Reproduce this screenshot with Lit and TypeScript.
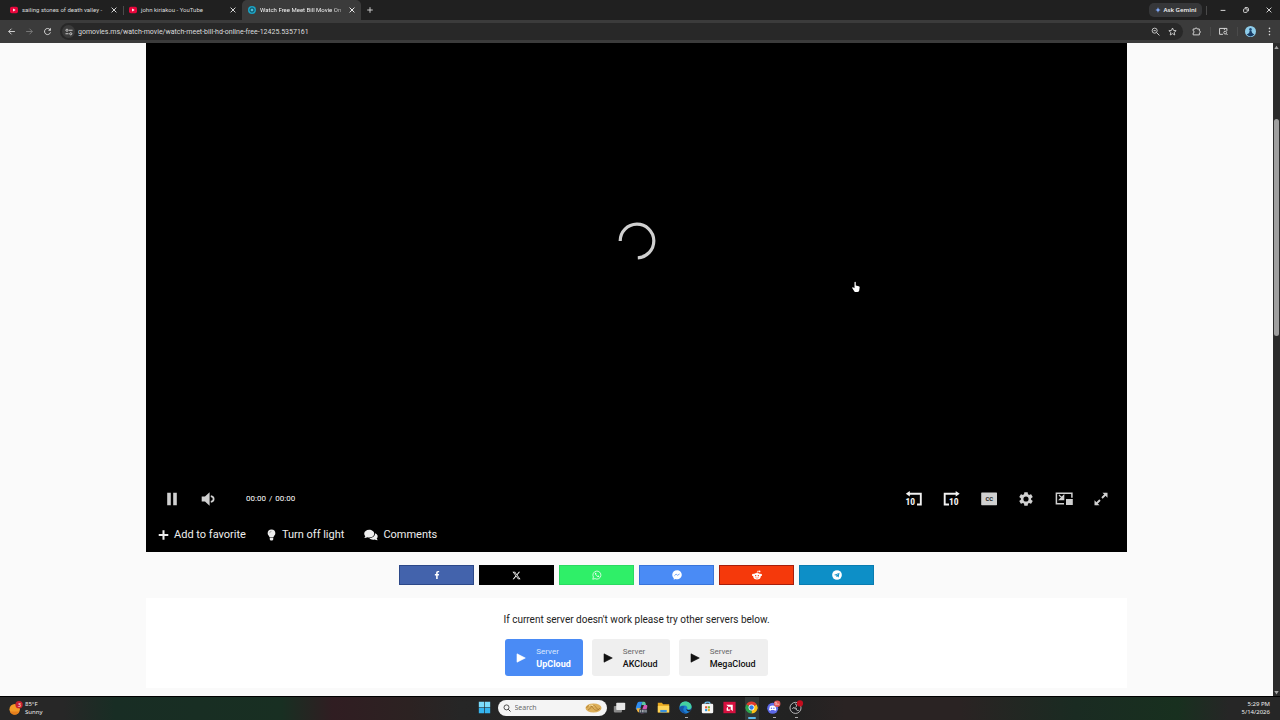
import { LitElement, html, css, svg, nothing, TemplateResult } from "lit";
import { customElement, property } from "lit/decorators.js";

type Glyph = { box: string; art: TemplateResult };

const GLYPHS: Record<string, Glyph> = {
  youtube: { box: "0 0 16 16", art: svg`<rect x="0" y="1.5" width="16" height="13" rx="3.5" fill="#e8063c"/><path d="M6.3 5v6l5-3z" fill="#fff"/>` },
  gomovies: { box: "0 0 16 16", art: svg`<circle cx="8" cy="8" r="8" fill="#1aa3c4"/><circle cx="8" cy="8" r="4.2" fill="none" stroke="#16404f" stroke-width="1.8"/><circle cx="8" cy="8" r="1.6" fill="#9fdcea"/>` },
  close: { box: "0 0 10 10", art: svg`<path d="M2 2l6 6M8 2L2 8" stroke="currentColor" stroke-width="1.2"/>` },
  plus: { box: "0 0 10 10", art: svg`<path d="M5 1.5v7M1.500 5h7" stroke="currentColor" stroke-width="1.1"/>` },
  spark: { box: "0 0 16 16", art: svg`<path d="M8 0c.7 5 3 7.300 8 8-5 .7-7.300 3-8 8-.7-5-3-7.300-8-8 5-.7 7.300-3 8-8z" fill="#7ea6f5"/>` },
  minimize: { box: "0 0 10 10", art: svg`<path d="M2 5.500h6" stroke="currentColor" stroke-width="1.200"/>` },
  restore: { box: "0 0 10 10", art: svg`<rect x="2" y="3.500" width="4.500" height="4.500" rx="1" fill="none" stroke="currentColor" stroke-width="1.200"/><path d="M3.500 2h3a1.500 1.500 0 0 1 1.500 1.500v3" fill="none" stroke="currentColor" stroke-width="1.200"/>` },
  back: { box: "0 0 16 16", art: svg`<path d="M14 8H3M8 3L3 8l5 5" fill="none" stroke="currentColor" stroke-width="1.600"/>` },
  forward: { box: "0 0 16 16", art: svg`<path d="M2 8h11M8 3l5 5-5 5" fill="none" stroke="currentColor" stroke-width="1.600"/>` },
  reload: { box: "0 0 16 16", art: svg`<path d="M13.300 9.500A5.400 5.400 0 1 1 12.200 4.500" fill="none" stroke="currentColor" stroke-width="1.700"/><path d="M14 1.500v5H9z" fill="currentColor"/>` },
  tune: { box: "0 0 16 16", art: svg`<path d="M8 4.500h7M1 11.500h6" stroke="currentColor" stroke-width="1.800"/><circle cx="4" cy="4.500" r="2.200" fill="none" stroke="currentColor" stroke-width="1.700"/><circle cx="11.500" cy="11.500" r="2.200" fill="none" stroke="currentColor" stroke-width="1.700"/>` },
  zoom: { box: "0 0 16 16", art: svg`<circle cx="6.500" cy="6.500" r="4.500" fill="none" stroke="currentColor" stroke-width="1.500"/><path d="M10 10l5 5M4.500 6.500h4" stroke="currentColor" stroke-width="1.600"/>` },
  star: { box: "0 0 16 16", art: svg`<path d="M8 1.800l1.900 4.300 4.600.4-3.500 3.100 1 4.600L8 11.800l-4 2.400 1-4.600-3.500-3.100 4.600-.4z" fill="none" stroke="currentColor" stroke-width="1.500"/>` },
  puzzle: { box: "0 0 16 16", art: svg`<path d="M2 3.500h3.500a1.800 1.800 0 0 1 3.600 0h4v3.500a1.800 1.800 0 0 1 0 3.600v3.400H2v-3.400a1.800 1.800 0 0 0 0-3.600z" fill="none" stroke="currentColor" stroke-width="1.600"/>` },
  lens: { box: "0 0 16 16", art: svg`<path d="M7 13H1V2.500h13V7" fill="none" stroke="currentColor" stroke-width="1.700"/><path d="M9.500 2.500v3" stroke="currentColor" stroke-width="1.500"/><circle cx="11" cy="10" r="2.500" fill="none" stroke="currentColor" stroke-width="1.600"/><path d="M12.700 11.700l2.500 2.500" stroke="currentColor" stroke-width="1.700"/>` },
  avatar: { box: "0 0 16 16", art: svg`<circle cx="8" cy="8" r="8" fill="#8ecdea"/><path d="M2.500 12.500a7 7 0 0 0 11 0L10.500 10l-1.500-4h-2l-1 4z" fill="#173a63"/><circle cx="8" cy="4.800" r="1.800" fill="#1f4c7a"/>` },
  dots: { box: "0 0 16 16", art: svg`<circle cx="8" cy="2.500" r="1.400" fill="currentColor"/><circle cx="8" cy="8" r="1.400" fill="currentColor"/><circle cx="8" cy="13.500" r="1.400" fill="currentColor"/>` },
  spinner: { box: "0 0 38 38", art: svg`<path d="M2.200 19A16.800 16.800 0 1 1 19.800 35.800" fill="none" stroke="#d0d0d0" stroke-width="3.200"/>` },
  hand: { box: "0 0 16 22", art: svg`<path d="M5 1.500c0-1.500 2.500-1.500 2.500 0V8l6 1.500c1.500.4 2 1.200 1.800 2.700l-.8 5.300c-.3 2-1.300 3.500-3.500 3.500H7.500c-1.500 0-2.300-.6-3-1.700L.7 13.500c-.8-1.300.8-2.500 2-1.500L5 13.500z" fill="#fff"/>` },
  pause: { box: "0 0 20 20", art: svg`<path d="M5.200 3.700h3.600v12.600H5.200zM11.200 3.700h3.600v12.600h-3.600z" fill="currentColor"/>` },
  volume: { box: "0 0 20 20", art: svg`<path d="M3.700 7.500h3.300l4.600-4.200v13.400L7 12.500H3.700z" fill="currentColor"/><path d="M12.800 7.200c3.800.6 3.800 5 0 5.600" fill="none" stroke="currentColor" stroke-width="1.700"/>` },
  rewind: { box: "0 0 20 20", art: svg`<path d="M4 4.700h12.800V15.500H13" fill="none" stroke="currentColor" stroke-width="1.900"/><path d="M1.800 4.700L5.800 1.900v5.600z" fill="currentColor"/><text x="1.500" y="16.300" font-family="Roboto Condensed, Roboto, sans-serif" font-weight="700" font-size="9.500" fill="currentColor">10</text>` },
  skip: { box: "0 0 20 20", art: svg`<path d="M16.500 4.700H3.700V15.500H8" fill="none" stroke="currentColor" stroke-width="1.900"/><path d="M18.700 4.700L14.700 1.900v5.600z" fill="currentColor"/><text x="8" y="16.300" font-family="Roboto Condensed, Roboto, sans-serif" font-weight="700" font-size="9.500" fill="currentColor">10</text>` },
  captions: { box: "0 0 20 20", art: svg`<rect x="2.200" y="3.500" width="15.800" height="12.700" rx=".6" fill="currentColor"/><text x="6.400" y="12" font-family="Roboto, sans-serif" font-weight="700" font-size="6" fill="#222">CC</text>` },
  gear: { box: "-2 -2 28 28", art: svg`<path fill="currentColor" d="M19.140 12.940c.04-.3.06-.61.06-.94 0-.32-.02-.64-.07-.94l2.030-1.580c.18-.14.23-.41.12-.61l-1.920-3.320c-.12-.22-.37-.29-.59-.22l-2.390.96c-.5-.38-1.030-.7-1.620-.94l-.36-2.540c-.04-.24-.24-.41-.48-.41h-3.840c-.24 0-.43.17-.47.41l-.36 2.540c-.59.24-1.130.57-1.620.94l-2.390-.96c-.22-.08-.47 0-.59.22L2.740 8.870c-.12.21-.08.47.12.61l2.030 1.580c-.05.3-.09.63-.09.94s.02.64.07.94l-2.030 1.580c-.18.14-.23.41-.12.61l1.920 3.320c.12.22.37.29.59.22l2.390-.96c.5.38 1.030.7 1.620.94l.36 2.540c.05.24.24.41.48.41h3.840c.24 0 .44-.17.47-.41l.36-2.540c.59-.24 1.130-.56 1.620-.94l2.390.96c.22.08.47 0 .59-.22l1.920-3.320c.12-.22.07-.47-.12-.61l-2.010-1.580zM12 15.600a3.600 3.600 0 1 1 0-7.200 3.600 3.600 0 0 1 0 7.200z"/>` },
  pip: { box: "0 0 20 20", art: svg`<path d="M10 14.800H2.400V4.300h15.500v4.500" fill="none" stroke="currentColor" stroke-width="1.500"/><rect x="12" y="10" width="6.800" height="6" fill="currentColor"/><path d="M9.700 6.500v4.200H5.500zM5 6l3.500 3.500" fill="currentColor" stroke="currentColor" stroke-width="1.200"/>` },
  expand: { box: "0 0 20 20", art: svg`<path d="M11 9l4.500-4.500M9 11l-4.500 4.500" stroke="currentColor" stroke-width="1.800"/><path d="M11.500 3.700h5v5zM3.500 11.300v5h5z" fill="currentColor"/>` },
  add: { box: "0 0 12 12", art: svg`<path d="M6 .8v10.400M.8 6h10.400" stroke="currentColor" stroke-width="2.200"/>` },
  bulb: { box: "0 0 12 12", art: svg`<path d="M6 0a4.200 4.200 0 0 0-4.200 4.200c0 2 1.600 2.600 2.100 4.300h4.200c.5-1.700 2.100-2.300 2.100-4.300A4.200 4.200 0 0 0 6 0zM4.100 9h3.800v1.800L7 12H5l-.9-1.200z" fill="currentColor"/><path d="M4 4a2 2 0 0 1 2-2" stroke="#777" stroke-width=".6" fill="none"/>` },
  comments: { box: "0 0 14 12", art: svg`<path d="M5.200.8C2.400.8.2 2.500.2 4.700c0 1 .4 1.800 1.100 2.500L.3 9c1.300 0 2.300-.4 3-.8 4 .9 6.900-.9 6.900-3.500C10.200 2.500 8 .8 5.200.8z" fill="currentColor"/><path d="M11 4.200c.2 3-2.700 5-5.700 4.900 1.200 1.400 3.300 1.900 5.300 1.400.8.500 1.800.8 3.100.8l-1-1.700c1.700-1.800 1.200-4.500-1.700-5.400z" fill="currentColor"/>` },
  facebook: { box: "0 0 320 512", art: svg`<path fill="currentColor" d="M279.140 288l14.220-92.660h-88.910v-60.130c0-25.350 12.420-50.060 52.240-50.060h40.420V6.260S260.430 0 225.360 0c-73.220 0-121.080 44.380-121.080 124.720v70.620H22.890V288h81.390v224h100.170V288z"/>` },
  x: { box: "0 0 512 512", art: svg`<path fill="currentColor" d="M389.200 48h70.600L305.600 224.200 487 464H345L233.700 318.600 106.500 464H35.800L200.700 275.500 26.800 48H172.400L272.900 180.900 389.200 48zM364.400 421.800h39.100L151.100 88h-42L364.400 421.800z"/>` },
  whatsapp: { box: "0 0 20 20", art: svg`<path d="M1.500 18.500l1.300-4.500a8 8 0 1 1 3.200 3.200z" fill="none" stroke="currentColor" stroke-width="1.500"/><path d="M7.200 5.500c-1.700.7-1.500 3 .8 5.600s5 3.600 6.300 1.900l.2-1-2.300-1.200-1.200 1.200c-1.300-.5-2.200-1.400-2.900-2.700l.9-1.200-1-2.500z" fill="currentColor"/>` },
  messenger: { box: "0 0 20 20", art: svg`<path d="M10 .5C4.600.5.500 4.400.500 9.600c0 2.700 1.100 5 3 6.600v3.300l2.800-1.400c1.200.3 2.400.5 3.700.5 5.400 0 9.500-3.900 9.500-9S15.400.5 10 .5z" fill="currentColor"/><path d="M4.800 11.500l3.400-3.300 2.800 2.300L15.200 8" fill="none" stroke="#4a8bf5" stroke-width="1.500"/>` },
  reddit: { box: "0 0 20 20", art: svg`<ellipse cx="10" cy="12.500" rx="7.500" ry="6.500" fill="currentColor"/><circle cx="2.400" cy="9.800" r="2.400" fill="currentColor"/><circle cx="17.600" cy="9.800" r="2.400" fill="currentColor"/><circle cx="15" cy="2.800" r="1.900" fill="currentColor"/><path d="M10 7l1.200-5L15 3" fill="none" stroke="currentColor" stroke-width="1.200"/><circle cx="7.300" cy="11.300" r="1.400" fill="#f5390b"/><circle cx="12.700" cy="11.300" r="1.400" fill="#f5390b"/><path d="M7 15c2 1.400 4 1.400 6 0" fill="none" stroke="#f5390b" stroke-width="1.100"/>` },
  telegram: { box: "0 0 20 20", art: svg`<circle cx="10" cy="10" r="9.700" fill="currentColor"/><path d="M3.800 10L15 5.300l-1.800 9.500-3-2.200-1.600 1.600-.5-3z" fill="#0d8fc7"/><path d="M8.300 11.200L13 7.500" stroke="currentColor" stroke-width=".9"/>` },
  play: { box: "0 0 10 10", art: svg`<path d="M1 .8L9.300 5 1 9.200z" fill="currentColor" stroke="currentColor" stroke-width=".6" stroke-linejoin="round"/>` },
  weather: { box: "0 0 16 16", art: svg`<circle cx="6.500" cy="9.500" r="6" fill="#f39a27"/><path d="M1 12a6 6 0 0 0 11 0z" fill="#e57f1c"/><circle cx="11.500" cy="4.200" r="4.200" fill="#c8202f"/><text x="9.900" y="6.500" font-family="Open Sans, sans-serif" font-size="6.500" fill="#fff">3</text>` },
  windows: { box: "0 0 16 16", art: svg`<path d="M1 1h6.600v6.600H1zM8.400 1H15v6.600H8.400z" fill="#7bdcfb"/><path d="M1 8.400h6.600V15H1zM8.400 8.400H15V15H8.400z" fill="#35b4ee"/>` },
  magnifier: { box: "0 0 16 16", art: svg`<circle cx="7" cy="6.800" r="5" fill="none" stroke="currentColor" stroke-width="1.700"/><path d="M10.500 10.500L15 15" stroke="currentColor" stroke-width="2"/>` },
  pretzel: { box: "0 0 34 20", art: svg`<ellipse cx="17" cy="10" rx="16" ry="9" fill="#dcae58"/><path d="M3 10c4-8 10-5 13 0s9 7 14 0M6 14c5-1 6-9 11-9s6 9 11 8" fill="none" stroke="#a87a30" stroke-width="1.600"/><path d="M8 6c4-3 8-2 10 1" stroke="#fbe6a8" stroke-width="2" fill="none"/>` },
  taskview: { box: "0 0 16 16", art: svg`<rect x="1" y="6" width="10" height="8" rx="1" fill="#8b8b8b"/><rect x="4" y="2" width="11" height="9" rx="1" fill="#e7e7e7"/>` },
  copilot: { box: "0 0 16 16", art: svg`<path d="M5 1h4L6 11H3C0 11 1 8 2 5S3.500 1 5 1z" fill="#2f8df0"/><path d="M9 1h2c2 0 2 2 2.500 4H8z" fill="#57c8a2"/><path d="M11 5h3c2 0 1 3 0 6s-2 4-4 4H7z" fill="#d159b4"/><path d="M2 9h5l-1 5H5c-2 0-3-3-3-5z" fill="#f2b53f"/><rect x="5" y="10" width="10" height="5" rx="1" fill="#37404d"/><path d="M6.500 14v-3M9 14v-3M11 11v3M13.500 11v3" stroke="#eee" stroke-width=".9"/>` },
  folder: { box: "0 0 16 16", art: svg`<path d="M1 2h5l1.500 2H15v10H1z" fill="#e9a920"/><path d="M1 6h14v8H1z" fill="#ffd558"/><path d="M4 11h8v3H4z" fill="#3a91dc"/>` },
  edge: { box: "0 0 16 16", art: svg`<circle cx="8" cy="8" r="7.500" fill="#1c7fd4"/><path d="M.8 7C1.500 2 5 .5 8 .5c4.500 0 7.500 3.300 7.500 6.500 0 3-4 4-5.500 2.500 1-2-1-4-3.500-4C4 5.500 2 6 .8 7z" fill="#45d0a0"/><path d="M7 7c-3 2-2 7 3 8-5 1.200-9-2-9.500-6.500C2 5.500 6 5.500 7 7z" fill="#1557a8"/><path d="M9 9.500c1.500 2 4.500 1.700 6 .7l-1 2.300c-2.500 1.300-5-.5-5-3z" fill="#202124"/>` },
  store: { box: "0 0 16 16", art: svg`<path d="M5 4V2.500C5 1 11 1 11 2.500V4" fill="none" stroke="#6fc4f5" stroke-width="1.400"/><rect x="1" y="3.500" width="14" height="11.500" rx="1.500" fill="#f4f4f4"/><path d="M5 6.500h2.600v2.600H5z" fill="#e4502d"/><path d="M8.400 6.500H11v2.600H8.400z" fill="#79b52b"/><path d="M5 9.900h2.600v2.600H5z" fill="#2b9be0"/><path d="M8.400 9.900H11v2.600H8.400z" fill="#efb020"/>` },
  amd: { box: "0 0 16 16", art: svg`<rect x=".5" y="1" width="15" height="14" fill="#d6103f"/><path d="M4 4.500h8v8l-2.500-2.500V7H6.500z" fill="#fff"/><path d="M4.500 8.500v3.500H8l1.500-1.600H6.200V7z" fill="#fff"/>` },
  chrome: { box: "0 0 16 16", art: svg`<path d="M8 8L1.500 4.250A7.500 7.500 0 0 1 14.500 4.250z" fill="#e33b2e"/><path d="M8 8L14.500 4.250A7.500 7.500 0 0 1 8 15.500z" fill="#fbc116"/><path d="M8 8v7.500A7.500 7.500 0 0 1 1.500 4.250z" fill="#2da44e"/><circle cx="8" cy="8" r="3.600" fill="#fff"/><circle cx="8" cy="8" r="2.700" fill="#2f7de9"/>` },
  discord: { box: "0 0 16 16", art: svg`<circle cx="7" cy="9" r="6.800" fill="#5c68e8"/><path d="M3.500 6.500c2-1.300 5-1.300 7 0l1 4.500c-1.500 1.300-2 1.200-2.500.2H5c-.5 1-1 1.100-2.500-.2z" fill="#fff"/><circle cx="5.500" cy="9" r=".9" fill="#5c68e8"/><circle cx="8.500" cy="9" r=".9" fill="#5c68e8"/><circle cx="12.500" cy="3.500" r="4" fill="#e2585a"/><text x="9.500" y="5.500" font-family="Open Sans, sans-serif" font-size="5" fill="#fff">9+</text>` },
  obs: { box: "0 0 16 16", art: svg`<circle cx="8" cy="8.500" r="6.800" fill="#1c1c1f" stroke="#c9c9c9" stroke-width="1.100"/><path d="M7.500 3.500c2 0 2.500 3 .5 4.500M4 9.500c1-2 3.500-1.500 4 .5M12 11.500c-2 1-4-1-3-3" fill="none" stroke="#c9c9c9" stroke-width="1.200"/><circle cx="13.500" cy="3" r="3.800" fill="#c40d1e"/>` },
  up: { box: "0 0 8 8", art: svg`<path d="M4 1l3.500 5.500h-7z" fill="currentColor"/>` },
  down: { box: "0 0 8 8", art: svg`<path d="M4 7L.5 1.500h7z" fill="currentColor"/>` },
};

@customElement("ui-glyph")
class UiGlyph extends LitElement {
  @property() name = "";
  static styles = css`
    :host { display: inline-flex; flex: none; width: 10px; height: 10px; }
    .art { width: 100%; height: 100%; display: block; overflow: visible; }
  `;
  render() {
    const g = GLYPHS[this.name];
    return g ? html`<svg class="art" viewBox=${g.box} aria-hidden="true">${g.art}</svg>` : nothing;
  }
}

@customElement("browser-chrome")
class BrowserChrome extends LitElement {
  static styles = css`
    :host { display: block; color: #dcdcdc; font: 7px/10px Roboto, sans-serif; }
    button { font: inherit; color: inherit; background: none; border: 0; padding: 0; display: flex; align-items: center; justify-content: center; }
    .strip { display: flex; align-items: center; height: 20px; background: #202020; padding-left: 4px; font-size: 6px; }
    .tab { display: flex; align-items: center; gap: 4px; width: 119px; height: 20px; padding: 0 5px 0 6px; box-sizing: border-box; }
    .tab.active { background: #3b3b3b; border-radius: 5px 5px 0 0; color: #f2f2f2; }
    .title { flex: 1; white-space: nowrap; }
    .active .title { mask-image: linear-gradient(90deg, #000 86%, #0005); }
    .rule { width: 1px; height: 9px; background: #4a4a4a; margin-right: -1px; }
    .fav { width: 8px; height: 8px; }
    .sm { width: 8px; height: 8px; }
    .new { margin-left: 4px; width: 10px; }
    .gap { flex: 1; }
    .gemini { gap: 3px; width: 53px; height: 14px; background: #363739; border-radius: 5px; font-family: "Noto Sans", sans-serif; font-weight: 600; color: #eee; margin-right: 4px; }
    .gemini ui-glyph { width: 6px; height: 6px; }
    .win { width: 23px; height: 20px; }
    .after { margin-right: 4px; }
    .bar { display: flex; align-items: center; height: 23px; background: #3b3b3b; padding: 0 6px 0 2px; box-sizing: border-box; }
    .nav { width: 18px; }
    .nav ui-glyph, .tool ui-glyph { width: 9px; height: 9px; }
    .dim { color: #7d7d7d; }
    .address { flex: 1; display: flex; align-items: center; height: 17px; margin: 0 0 0 4px; background: #282828; border-radius: 9px; padding: 0 2px 0 2px; }
    .site { width: 13px; height: 13px; border-radius: 50%; background: #3b3b3b; }
    .url { flex: 1; min-width: 0; border: 0; outline: 0; background: none; color: #dcdcdc; font: inherit; padding: 0 0 0 3px; }
    .tool { width: 17px; }
    .wide { width: 27px; }
    .tool .me { width: 11px; height: 11px; }
    .menu { width: 10px; }
  `;
  tabs = [
    { icon: "youtube", title: "sailing stones of death valley -", active: false },
    { icon: "youtube", title: "john kiriakou - YouTube", active: false },
    { icon: "gomovies", title: "Watch Free Meet Bill Movie On", active: true },
  ];
  render() {
    return html`
      <div class="strip">
        ${this.tabs.map((t, i) => html`
          <div class="tab ${t.active ? "active" : ""}">
            <ui-glyph class="fav" name=${t.icon}></ui-glyph>
            <span class="title">${t.title}</span>
            <button aria-label="Close tab"><ui-glyph class="sm" name="close"></ui-glyph></button>
          </div>
          ${i === 0 ? html`<span class="rule"></span>` : nothing}`)}
        <button class="new" aria-label="New tab"><ui-glyph class="sm" name="plus"></ui-glyph></button>
        <span class="gap"></span>
        <button class="gemini"><ui-glyph name="spark"></ui-glyph>Ask Gemini</button>
        <span class="rule after"></span>
        ${["minimize", "restore", "close"].map((n) => html`<button class="win" aria-label=${n}><ui-glyph class="sm" name=${n}></ui-glyph></button>`)}
      </div>
      <div class="bar">
        <button class="nav" aria-label="Back"><ui-glyph name="back"></ui-glyph></button>
        <button class="nav dim" aria-label="Forward"><ui-glyph name="forward"></ui-glyph></button>
        <button class="nav" aria-label="Reload"><ui-glyph name="reload"></ui-glyph></button>
        <div class="address">
          <button class="site" aria-label="Site information"><ui-glyph class="sm" name="tune"></ui-glyph></button>
          <input class="url" aria-label="Address" value="gomovies.ms/watch-movie/watch-meet-bill-hd-online-free-12425.5357161" />
          <button class="tool" aria-label="Zoom"><ui-glyph name="zoom"></ui-glyph></button>
          <button class="tool" aria-label="Bookmark"><ui-glyph name="star"></ui-glyph></button>
        </div>
        <button class="tool wide" aria-label="Extensions"><ui-glyph name="puzzle"></ui-glyph></button>
        <span class="rule"></span>
        <button class="tool wide" aria-label="Search page"><ui-glyph name="lens"></ui-glyph></button>
        <span class="rule"></span>
        <button class="tool wide" aria-label="Profile"><ui-glyph class="me" name="avatar"></ui-glyph></button>
        <button class="tool menu" aria-label="Menu"><ui-glyph name="dots"></ui-glyph></button>
      </div>`;
  }
}

@customElement("movie-player")
class MoviePlayer extends LitElement {
  static styles = css`
    :host { display: block; position: relative; background: #000; color: #fff; font-family: Roboto, sans-serif; }
    button { font: inherit; color: inherit; background: none; border: 0; padding: 0; display: flex; align-items: center; }
    .stage { display: grid; place-items: center; height: 396px; }
    .spinner { width: 38px; height: 38px; }
    .hand { position: absolute; left: 706px; top: 238px; width: 8px; height: 12px; }
    .controls { display: flex; align-items: center; height: 39px; padding: 40px 16px 0; color: #d0d0d0; }
    .controls ui-glyph { width: 20px; height: 20px; }
    .left { display: flex; align-items: center; gap: 16px; flex: 1; }
    .time { display: flex; gap: 3px; font-size: 8px; line-height: 12px; color: #fff; margin-left: 12px; }
    .right { display: flex; justify-content: space-between; width: 207px; }
    .right .bright { color: #f2f2f2; }
    .actions { display: flex; gap: 20px; height: 34px; padding: 0 12px; font-size: 11px; line-height: 16px; color: #eee; }
    .actions button { gap: 5px; }
    .actions ui-glyph { width: 11px; height: 12px; }
    .actions .talk { width: 14px; height: 12px; }
  `;
  render() {
    return html`
      <div class="stage"><ui-glyph class="spinner" name="spinner"></ui-glyph></div>
      <ui-glyph class="hand" name="hand"></ui-glyph>
      <div class="controls">
        <div class="left">
          <button aria-label="Pause"><ui-glyph name="pause"></ui-glyph></button>
          <button aria-label="Volume"><ui-glyph name="volume"></ui-glyph></button>
          <span class="time"><span>00:00</span><span>/</span><span>00:00</span></span>
        </div>
        <div class="right">
          ${["rewind", "skip", "captions", "gear", "pip", "expand"].map((n, i) => html`<button class=${i < 2 ? "bright" : ""} aria-label=${n}><ui-glyph name=${n}></ui-glyph></button>`)}
        </div>
      </div>
      <div class="actions">
        <button><ui-glyph name="add"></ui-glyph>Add to favorite</button>
        <button><ui-glyph name="bulb"></ui-glyph>Turn off light</button>
        <button><ui-glyph class="talk" name="comments"></ui-glyph>Comments</button>
      </div>`;
  }
}

@customElement("share-row")
class ShareRow extends LitElement {
  static styles = css`
    :host { display: flex; justify-content: center; gap: 5px; }
    .share { display: flex; align-items: center; justify-content: center; width: 75px; height: 20px; box-sizing: border-box; color: #fff; border: 1px solid #0003; }
    .facebook { background: #4363ac; border-color: #2c4888; }
    .x { background: #000; }
    .whatsapp { background: #2fef68; border-color: #2bd961; }
    .messenger { background: #4a8bf5; border-color: #3974d9; }
    .reddit { background: #f5390b; border-color: #a61e0c; }
    .telegram { background: #0d8fc7; border-color: #0a7cb0; }
    .x ui-glyph { width: 9px; height: 9px; }
    .facebook ui-glyph { width: 6px; height: 8px; }
  `;
  render() {
    return html`${["facebook", "x", "whatsapp", "messenger", "reddit", "telegram"].map(
      (n) => html`<a class="share ${n}" href="#${n}" aria-label="Share on ${n}"><ui-glyph name=${n}></ui-glyph></a>`)}`;
  }
}

@customElement("server-panel")
class ServerPanel extends LitElement {
  static styles = css`
    :host { display: flex; flex-direction: column; align-items: center; gap: 12px; padding: 14px 0 12px; background: #fff; color: #222; font-family: Roboto, sans-serif; }
    .note { margin: 0; font-size: 10px; line-height: 15px; }
    .list { display: flex; gap: 9px; }
    .server { display: grid; grid-template-columns: 10px auto; column-gap: 10px; align-items: center; text-align: left; height: 37px; padding: 0 12px 0 11px; border: 0; border-radius: 3px; background: #efefef; color: #111; font-family: inherit; }
    .server.on { background: #4a8bf5; color: #fff; }
    .small { display: block; font-size: 8px; line-height: 13px; color: #666; }
    .on .small { color: #dbe8ff; }
    .name { display: block; font-size: 9px; line-height: 13px; font-weight: 500; }
    .on .name { font-weight: 700; }
  `;
  render() {
    return html`
      <p class="note">If current server doesn't work please try other servers below.</p>
      <div class="list">
        ${["UpCloud", "AKCloud", "MegaCloud"].map((n, i) => html`
          <button class="server ${i === 0 ? "on" : ""}">
            <ui-glyph name="play"></ui-glyph>
            <span><span class="small">Server</span><span class="name">${n}</span></span>
          </button>`)}
      </div>`;
  }
}

@customElement("task-bar")
class TaskBar extends LitElement {
  static styles = css`
    :host { display: grid; grid-template-columns: 1fr auto 1fr; align-items: center; height: 24px; box-sizing: border-box; border-top: 1px solid #000; color: #eee; font: 6px/8px "Noto Sans", sans-serif;
      background: linear-gradient(90deg, #272727 5%, #182d24 9%, #182f22 22%, #301d22 26%, #2c2222 32%, #262626 36%, #222 62%, #2a2323 66%, #2a2323 75%, #1a2b22 84%, #18301f 92%, #262626 96%); }
    .weather { display: flex; align-items: center; gap: 2px; padding: 0 0 2px 9px; }
    .weather ui-glyph { width: 14px; height: 14px; }
    .apps { display: flex; align-items: center; gap: 8px; }
    .app { position: relative; display: flex; align-items: center; justify-content: center; width: 14px; height: 23px; padding: 0 0 2px; box-sizing: border-box; border: 0; background: none; }
    .app ui-glyph { width: 13px; height: 13px; }
    .run::after { content: ""; position: absolute; bottom: 2px; left: 6px; width: 3px; height: 1px; background: #aaa; }
    .front { background: #333837; }
    .front::after { content: ""; position: absolute; bottom: 1px; left: 3px; width: 8px; height: 2px; background: #5bb8ea; border-radius: 1px; }
    .search { display: flex; align-items: center; gap: 4px; width: 109px; height: 16px; padding: 0 5px; box-sizing: border-box; border-radius: 8px; background: #f4f4f4; color: #333; margin: 0 -2px 2px -2px; }
    .search .mag { width: 8px; height: 8px; }
    .search .treat { width: 17px; height: 10px; }
    .field { flex: 1; min-width: 0; border: 0; outline: 0; padding: 0; background: none; font: 7px/10px "Noto Sans", sans-serif; }
    .field::placeholder { color: #6a6a6a; }
    .clock { text-align: right; padding: 0 10px 2px 0; }
  `;
  apps = [
    ["taskview", ""], ["copilot", ""], ["folder", ""], ["edge", "run"], ["store", ""],
    ["amd", ""], ["chrome", "front"], ["discord", "run"], ["obs", "run"],
  ];
  render() {
    return html`
      <div class="weather"><ui-glyph name="weather"></ui-glyph><span>85°F<br />Sunny</span></div>
      <div class="apps">
        <button class="app" aria-label="Start"><ui-glyph name="windows"></ui-glyph></button>
        <label class="search"><ui-glyph class="mag" name="magnifier"></ui-glyph><input class="field" placeholder="Search" aria-label="Search" /><ui-glyph class="treat" name="pretzel"></ui-glyph></label>
        ${this.apps.map(([n, s]) => html`<button class="app ${s}" aria-label=${n}><ui-glyph name=${n}></ui-glyph></button>`)}
      </div>
      <div class="clock">5:29 PM<br />5/14/2026</div>`;
  }
}

@customElement("app-root")
class AppRoot extends LitElement {
  static styles = css`
    :host { display: flex; flex-direction: column; height: 100vh; overflow: hidden; background: #fafafa; }
    .view { flex: 1; min-height: 0; display: flex; background: #fafafa; }
    .page { flex: 1; min-width: 0; overflow: hidden; }
    .column { display: flex; flex-direction: column; gap: 13px; max-width: 981px; margin: 0 auto; }
    .scroll { display: flex; flex-direction: column; align-items: center; width: 7px; box-sizing: border-box; background: #2b2b2b; color: #a5a5a5; padding: 2px 0 1px; }
    .scroll ui-glyph { width: 5px; height: 5px; }
    .track { flex: 1; width: 5px; padding-top: 69px; }
    .thumb { height: 38%; border-radius: 3px; background: #9f9f9f; }
  `;
  render() {
    return html`
      <browser-chrome></browser-chrome>
      <div class="view">
        <main class="page">
          <div class="column">
            <movie-player></movie-player>
            <share-row></share-row>
            <server-panel></server-panel>
          </div>
        </main>
        <div class="scroll">
          <ui-glyph name="up"></ui-glyph>
          <div class="track"><div class="thumb"></div></div>
          <ui-glyph name="down"></ui-glyph>
        </div>
      </div>
      <task-bar></task-bar>`;
  }
}
